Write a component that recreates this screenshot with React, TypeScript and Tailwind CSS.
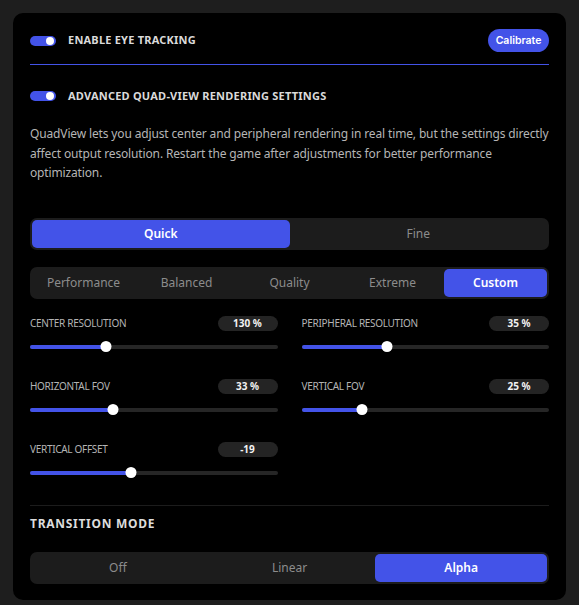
import { useState } from 'react';

type SliderProps = {
  label: string;
  value: string;
  pct: number;
};

const ACCENT = 'bg-[#4353e8]';

function Toggle() {
  return (
    <span className={`relative inline-flex h-[10px] w-[26px] shrink-0 items-center rounded-full ${ACCENT}`}>
      <span className="absolute right-[2px] h-[8px] w-[8px] rounded-full bg-white" />
    </span>
  );
}

function Segmented({ items, active }: { items: string[]; active: string }) {
  return (
    <div className="flex h-[32px] rounded-[7px] bg-[#1c1c1c] p-[2px]">
      {items.map((item) => (
        <button
          key={item}
          type="button"
          className={
            item === active
              ? `flex-1 rounded-[5px] pt-px ${ACCENT} text-[12px] font-semibold text-white`
              : 'flex-1 rounded-[5px] pt-px text-[12px] text-[#8c8c8c]'
          }
        >
          {item}
        </button>
      ))}
    </div>
  );
}

function Slider({ label, value, pct }: SliderProps) {
  return (
    <div className="flex flex-col">
      <div className="flex h-[15px] items-center justify-between">
        <span className="text-[10px] tracking-[-0.03em] text-[#b4b4b4]">{label}</span>
        <span className="flex h-[15px] w-[60px] items-center justify-center rounded-full bg-[#242424] text-[10px] font-bold text-[#f2f2f2]">
          {value}
        </span>
      </div>
      <div className="relative mt-[10px] flex h-[12px] items-center">
        <div className="h-[4px] w-full rounded-full bg-[#262626]" />
        <div className={`absolute left-0 h-[4px] rounded-full ${ACCENT}`} style={{ width: `${pct}%` }} />
        <div
          className="absolute h-[11px] w-[11px] -translate-x-1/2 rounded-full bg-white"
          style={{ left: `${pct}%` }}
        />
      </div>
    </div>
  );
}

export default function App() {
  const [mode] = useState('Quick');

  return (
    <div className="min-h-screen bg-[#1e1e1e] p-[13px] font-['Noto_Sans',sans-serif]">
      <div className="w-[553px] rounded-[10px] bg-black px-[17px] pt-[16px] pb-[16px]">
        <div className="box-content flex h-[23px] items-center justify-between border-b border-[#4353e8] pb-[12px]">
          <div className="flex items-center gap-[12px]">
            <Toggle />
            <span className="text-[11px] font-bold tracking-[0.02em] text-[#dadada]">ENABLE EYE TRACKING</span>
          </div>
          <button
            type="button"
            className={`h-[23px] w-[61px] rounded-full ${ACCENT} font-['Inter',sans-serif] text-[10.5px] font-semibold text-white`}
          >
            Calibrate
          </button>
        </div>

        <div className="mt-[21px] flex h-[20px] items-center gap-[12px]">
          <Toggle />
          <span className="text-[11px] font-bold tracking-[0.02em] text-[#dadada]">
            ADVANCED QUAD-VIEW RENDERING SETTINGS
          </span>
        </div>

        <p className="mt-[18px] text-[12px] leading-[19.5px] tracking-[-0.012em] text-[#b5b5b5]">
          QuadView lets you adjust center and peripheral rendering in real time, but the settings directly affect
          output resolution. Restart the game after adjustments for better performance optimization.
        </p>

        <div className="mt-[35px]">
          <Segmented items={['Quick', 'Fine']} active={mode} />
        </div>
        <div className="mt-[17px]">
          <Segmented items={['Performance', 'Balanced', 'Quality', 'Extreme', 'Custom']} active="Custom" />
        </div>

        <div className="mt-[17px] grid grid-cols-2 gap-x-[24px] gap-y-[26px]">
          <Slider label="CENTER RESOLUTION" value="130 %" pct={30.6} />
          <Slider label="PERIPHERAL RESOLUTION" value="35 %" pct={34.7} />
          <Slider label="HORIZONTAL FOV" value="33 %" pct={33.5} />
          <Slider label="VERTICAL FOV" value="25 %" pct={24.6} />
          <Slider label="VERTICAL OFFSET" value="-19" pct={40.7} />
        </div>

        <div className="mt-[26px] border-t border-[#1c1c1c] pt-[10px]">
          <h3 className="text-[12px] leading-[16px] font-bold tracking-[0.06em] text-[#dcdcdc]">TRANSITION MODE</h3>
          <div className="mt-[20px]">
            <Segmented items={['Off', 'Linear', 'Alpha']} active="Alpha" />
          </div>
        </div>
      </div>
    </div>
  );
}
